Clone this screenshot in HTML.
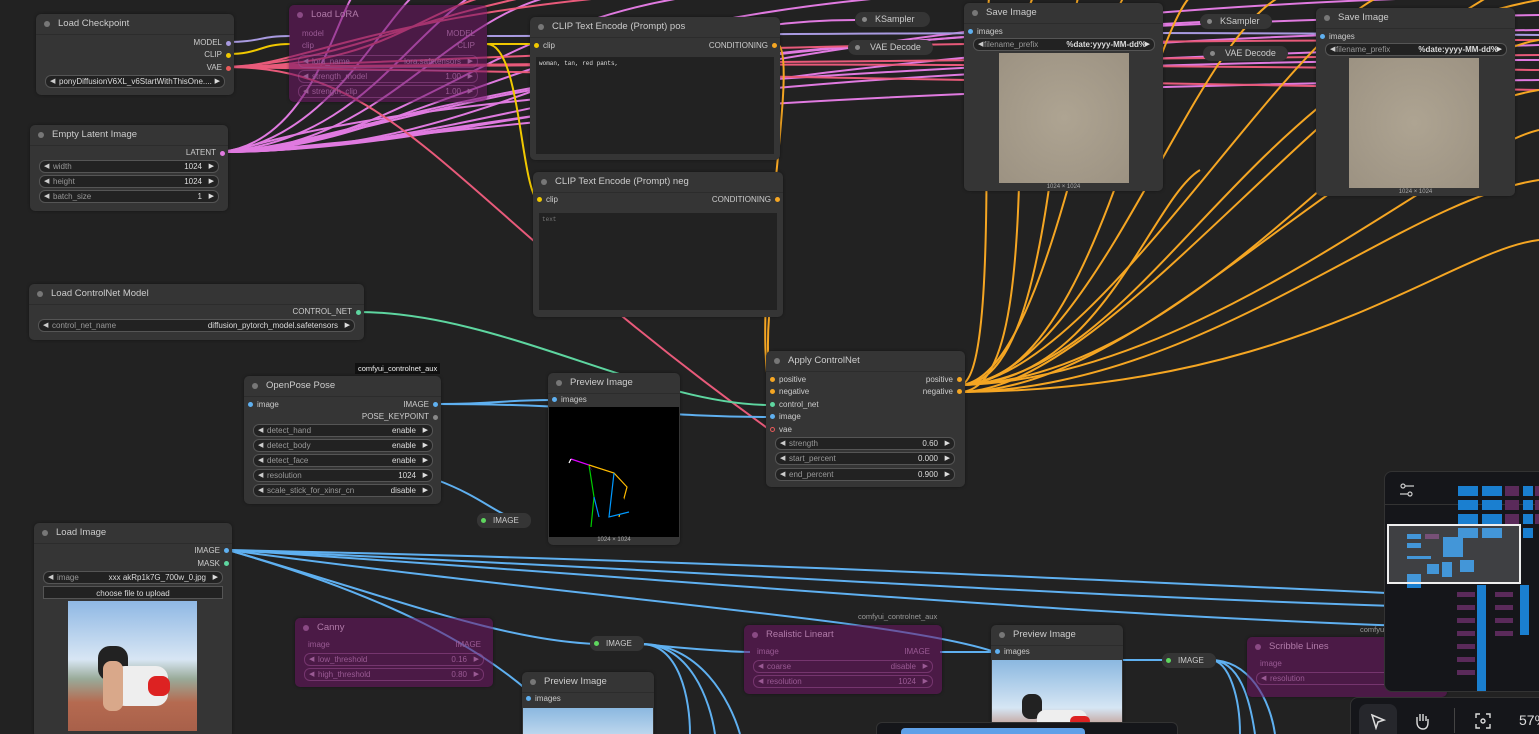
<!DOCTYPE html>
<html style="overflow:hidden"><head><style>
html,body{margin:0;width:1539px;height:734px;overflow:hidden}
body{background:#222;font-family:"Liberation Sans",sans-serif;font-size:9px;color:#ddd;position:relative}
.n{position:absolute;background:#353535;border-radius:5px;box-shadow:0 0 3px #0006}
.n .t{height:20px;line-height:20px;padding-left:22px;font-size:9.5px;color:#ccc;position:relative;border-bottom:1px solid #2c2c2c}
.n .t:before{content:"";position:absolute;left:8px;top:7px;width:6px;height:6px;border-radius:50%;background:#777}
.bp{background:rgba(110,20,100,.55)}
.bp .t{color:#b07aa8;border-color:transparent}
.bp .t:before{background:#8a4a84}
.bp .w{background:transparent;border-color:rgba(160,80,150,.5);color:#9a5a94}
.bp .w span,.bp .w:before,.bp .w:after,.bp .o{color:#9a5a94}
.w{position:absolute;height:11px;border:1px solid #555;background:#222;border-radius:6px;font-size:8px;line-height:11px;color:#999}
.w span{position:absolute;right:16px;color:#ddd}
.w:before{content:"◀";position:absolute;left:4px;font-size:7px;color:#ccc}
.w:after{content:"▶";position:absolute;right:4px;font-size:7px;color:#ddd}
.w i{font-style:normal;margin-left:13px}
.o{position:absolute;font-size:8px;color:#ccc}
.d{position:absolute;width:5px;height:5px;border-radius:50%}
.pill{position:absolute;height:15px;background:#353535;border-radius:8px;font-size:9px;line-height:15px;color:#ccc}
.pill:before{content:"";position:absolute;left:7px;top:5px;width:5px;height:5px;border-radius:50%;background:#888}
.r{position:absolute;height:15px;background:#353535;border-radius:7px;font-size:8px;line-height:15px;color:#ccc;padding:0 12px 0 16px}
.mb{position:absolute;background:#1a7fd0}
.mp{position:absolute;background:#5a2a5a}
</style></head><body>
<svg width="1539" height="734" style="position:absolute;left:0;top:0" fill="none" stroke-width="2">
<g stroke="#e07ae0">
<path d="M222 152C500 152 600 20 855 20"/><path d="M222 152C500 152 700 10 1539 -5"/><path d="M222 152C500 150 700 40 1539 30"/><path d="M222 152C450 150 600 60 1539 60"/><path d="M222 152C420 150 500 0 760 -10"/><path d="M222 152C420 150 520 10 1000 -10"/><path d="M222 152C400 150 450 -10 600 -10"/><path d="M222 152C400 140 480 30 1539 15"/><path d="M222 152C400 140 450 60 1200 22"/><path d="M222 152C300 140 350 80 1539 45"/><path d="M222 152C360 140 400 40 480 -10"/><path d="M222 152C330 140 380 20 420 -10"/><path d="M222 152C450 140 600 90 1539 80"/><path d="M222 152C320 140 340 -10 360 -10"/>
</g>
<g stroke="#e85a7a">
<path d="M228 67C500 67 700 60 1539 70"/><path d="M228 67C400 67 420 0 520 -10"/><path d="M228 67C500 60 700 40 1539 40"/><path d="M228 67C500 67 800 60 1539 55"/><path d="M228 67C300 67 380 10 700 -10"/><path d="M228 67C400 67 600 70 1539 90"/><path d="M228 67C400 67 450 200 770 430"/><path d="M228 67C350 60 400 20 560 -10"/>
</g>
<path d="M228 42C260 42 260 36 290 36" stroke="#a89ae0"/><path d="M228 54C260 54 260 44 290 44" stroke="#f0c800"/>
<path d="M487 44C520 44 520 180 537 200" stroke="#f0c800"/><path d="M487 44H537" stroke="#f0c800"/>
<path d="M487 36C700 36 900 30 1539 35" stroke="#a89ae0"/>
<path d="M358 312C500 312 650 405 770 405" stroke="#5ed6a0"/>
<path d="M437 404C500 404 500 400 553 400" stroke="#5fb0f0"/><path d="M437 404C600 404 650 417 770 417" stroke="#5fb0f0"/>
<path d="M437 480C490 500 500 520 527 520" stroke="#5fb0f0"/>
<g stroke="#5fb0f0"><path d="M228 550C700 560 1100 580 1539 600"/><path d="M228 550C700 570 1100 600 1539 610"/><path d="M228 550C700 580 1100 620 1539 630"/><path d="M228 550C400 600 500 640 596 644"/><path d="M228 550C400 600 480 650 527 690"/><path d="M228 550C600 600 900 620 995 652"/><path d="M641 644C700 644 730 700 740 734"/><path d="M641 644C690 644 710 700 715 734"/><path d="M641 644C680 644 690 700 690 734"/><path d="M641 644C700 650 740 652 750 652"/><path d="M940 652C990 652 995 652 995 652"/><path d="M1210 660C1240 660 1250 700 1255 734"/><path d="M1210 660C1230 660 1240 700 1240 734"/><path d="M1210 660C1250 660 1270 700 1275 734"/><path d="M1123 660C1140 660 1150 660 1165 660"/></g>
<g stroke="#f5a623">
<path d="M960 385C1100 385 1150 0 1200 -10"/><path d="M960 385C1100 380 1200 0 1300 -10"/><path d="M960 385C1050 380 1100 0 1130 -10"/><path d="M960 385C1200 380 1400 60 1539 40"/><path d="M960 385C1200 380 1450 150 1539 130"/><path d="M960 385C1100 380 1300 0 1400 -10"/><path d="M960 392C1050 390 1000 0 1040 -10"/><path d="M960 392C1200 390 1400 200 1539 180"/><path d="M960 392C1100 390 1300 100 1500 -10"/><path d="M960 385C1000 380 980 50 990 -10"/><path d="M960 385C1150 380 1250 50 1539 0"/><path d="M960 392C1300 390 1450 250 1539 240"/><path d="M960 385C1100 385 1150 200 1200 170"/><path d="M960 385C1050 385 1050 100 1080 -10"/><path d="M960 392C1150 390 1350 120 1539 90"/>
<path d="M778 200C790 220 760 300 770 380"/><path d="M778 44C800 60 750 300 770 392"/>
</g>
</svg>

<div class="n" style="left:36px;top:14px;width:198px;height:81px"><div class="t">Load Checkpoint</div>
<div class="o" style="right:12px;top:24px">MODEL</div><div class="o" style="right:12px;top:36px">CLIP</div><div class="o" style="right:12px;top:49px">VAE</div>
<div class="d" style="right:3px;top:27px;background:#a89ae0"></div><div class="d" style="right:3px;top:39px;background:#f0c800"></div><div class="d" style="right:3px;top:52px;background:#e85a5a"></div>
<div class="w" style="left:9px;top:61px;width:178px"><i style="color:#ddd">ponyDiffusionV6XL_v6StartWithThisOne....</i></div></div>

<div class="n bp" style="left:289px;top:5px;width:198px;height:97px"><div class="t">Load LoRA</div>
<div class="o" style="left:13px;top:24px">model</div><div class="o" style="left:13px;top:36px">clip</div>
<div class="o" style="right:12px;top:24px">MODEL</div><div class="o" style="right:12px;top:36px">CLIP</div>
<div class="w" style="left:9px;top:50px;width:178px"><i>lora_name</i><span>lora.safetensors</span></div>
<div class="w" style="left:9px;top:65px;width:178px"><i>strength_model</i><span>1.00</span></div>
<div class="w" style="left:9px;top:80px;width:178px"><i>strength_clip</i><span>1.00</span></div></div>

<div class="n" style="left:30px;top:125px;width:198px;height:86px"><div class="t">Empty Latent Image</div>
<div class="o" style="right:12px;top:23px">LATENT</div><div class="d" style="right:3px;top:26px;background:#e07ae0"></div>
<div class="w" style="left:9px;top:35px;width:178px"><i>width</i><span>1024</span></div>
<div class="w" style="left:9px;top:50px;width:178px"><i>height</i><span>1024</span></div>
<div class="w" style="left:9px;top:65px;width:178px"><i>batch_size</i><span>1</span></div></div>

<div class="n" style="left:530px;top:17px;width:250px;height:143px"><div class="t">CLIP Text Encode (Prompt) pos</div>
<div class="o" style="left:13px;top:24px">clip</div><div class="d" style="left:4px;top:26px;background:#f0c800"></div>
<div class="o" style="right:12px;top:24px">CONDITIONING</div><div class="d" style="right:3px;top:26px;background:#f5a623"></div>
<div style="position:absolute;left:6px;top:40px;width:238px;height:97px;background:#222;font:6px 'Liberation Mono',monospace;padding:3px;box-sizing:border-box">woman, tan, red pants,</div></div>

<div class="n" style="left:533px;top:172px;width:250px;height:145px"><div class="t">CLIP Text Encode (Prompt) neg</div>
<div class="o" style="left:13px;top:23px">clip</div><div class="d" style="left:4px;top:25px;background:#f0c800"></div>
<div class="o" style="right:12px;top:23px">CONDITIONING</div><div class="d" style="right:3px;top:25px;background:#f5a623"></div>
<div style="position:absolute;left:6px;top:41px;width:238px;height:97px;background:#222;font:6px 'Liberation Mono',monospace;padding:3px;box-sizing:border-box;color:#777">text</div></div>

<div class="pill" style="left:855px;top:12px;width:75px;padding-left:20px;box-sizing:border-box">KSampler</div>
<div class="pill" style="left:848px;top:40px;width:85px;padding-left:22px;box-sizing:border-box">VAE Decode</div>
<div class="pill" style="left:1200px;top:14px;width:72px;padding-left:20px;box-sizing:border-box">KSampler</div>
<div class="pill" style="left:1203px;top:46px;width:85px;padding-left:22px;box-sizing:border-box">VAE Decode</div>

<div class="n" style="left:964px;top:3px;width:199px;height:188px"><div class="t">Save Image</div>
<div class="o" style="left:13px;top:24px">images</div><div class="d" style="left:4px;top:26px;background:#5fb0f0"></div>
<div class="w" style="left:9px;top:35px;width:180px"><i style="margin-left:10px">filename_prefix</i><span style="right:8px;font-weight:bold">%date:yyyy-MM-dd%</span></div>
<div style="position:absolute;left:35px;top:50px;width:130px;height:130px;background:radial-gradient(#aea492,#9c9282)"></div>
<div style="position:absolute;left:0;width:100%;top:181px;text-align:center;font-size:6px;color:#aaa">1024 × 1024</div></div>

<div class="n" style="left:1316px;top:8px;width:199px;height:188px"><div class="t">Save Image</div>
<div class="o" style="left:13px;top:24px">images</div><div class="d" style="left:4px;top:26px;background:#5fb0f0"></div>
<div class="w" style="left:9px;top:35px;width:180px"><i style="margin-left:10px">filename_prefix</i><span style="right:8px;font-weight:bold">%date:yyyy-MM-dd%</span></div>
<div style="position:absolute;left:33px;top:50px;width:130px;height:130px;background:radial-gradient(#aea492,#9c9282)"></div>
<div style="position:absolute;left:0;width:100%;top:181px;text-align:center;font-size:6px;color:#aaa">1024 × 1024</div></div>

<div class="n" style="left:29px;top:284px;width:335px;height:56px"><div class="t">Load ControlNet Model</div>
<div class="o" style="right:12px;top:23px">CONTROL_NET</div><div class="d" style="right:3px;top:26px;background:#5ed6a0"></div>
<div class="w" style="left:9px;top:35px;width:315px"><i>control_net_name</i><span>diffusion_pytorch_model.safetensors</span></div></div>

<div style="position:absolute;left:355px;top:363px;background:#111;color:#eee;font-size:7.5px;padding:1px 3px">comfyui_controlnet_aux</div>
<div class="n" style="left:244px;top:376px;width:197px;height:128px"><div class="t">OpenPose Pose</div>
<div class="o" style="left:13px;top:24px">image</div><div class="d" style="left:4px;top:26px;background:#5fb0f0"></div>
<div class="o" style="right:12px;top:24px">IMAGE</div><div class="d" style="right:3px;top:26px;background:#5fb0f0"></div>
<div class="o" style="right:12px;top:36px">POSE_KEYPOINT</div><div class="d" style="right:3px;top:39px;background:#888"></div>
<div class="w" style="left:9px;top:48px;width:178px"><i>detect_hand</i><span>enable</span></div>
<div class="w" style="left:9px;top:63px;width:178px"><i>detect_body</i><span>enable</span></div>
<div class="w" style="left:9px;top:78px;width:178px"><i>detect_face</i><span>enable</span></div>
<div class="w" style="left:9px;top:93px;width:178px"><i>resolution</i><span>1024</span></div>
<div class="w" style="left:9px;top:108px;width:178px"><i>scale_stick_for_xinsr_cn</i><span>disable</span></div></div>

<div class="n" style="left:548px;top:373px;width:132px;height:172px"><div class="t">Preview Image</div>
<div class="o" style="left:13px;top:22px">images</div><div class="d" style="left:4px;top:24px;background:#5fb0f0"></div>
<div style="position:absolute;left:1px;top:34px;width:130px;height:130px;background:#000"><svg width="130" height="130" stroke-width="1.2"><path d="M22 52L40 58L50 72" stroke="#d0f"/><path d="M40 58L45 90L42 120" stroke="#0c0"/><path d="M40 58L65 66L78 80L70 110" stroke="#fb0"/><path d="M45 90L50 110" stroke="#08f"/><path d="M65 66L60 110L80 105" stroke="#09f"/><path d="M22 52L20 56" stroke="#fff"/></svg></div>
<div style="position:absolute;left:0;width:100%;top:164px;text-align:center;font-size:6px;color:#aaa">1024 × 1024</div></div>

<div class="n" style="left:766px;top:351px;width:199px;height:136px"><div class="t">Apply ControlNet</div>
<div class="o" style="left:13px;top:24px">positive</div><div class="d" style="left:4px;top:26px;background:#f5a623"></div>
<div class="o" style="left:13px;top:36px">negative</div><div class="d" style="left:4px;top:38px;background:#f5a623"></div>
<div class="o" style="left:13px;top:49px">control_net</div><div class="d" style="left:4px;top:51px;background:#5ed6a0"></div>
<div class="o" style="left:13px;top:61px">image</div><div class="d" style="left:4px;top:63px;background:#5fb0f0"></div>
<div class="o" style="left:13px;top:74px">vae</div><div class="d" style="left:4px;top:76px;border:1px solid #e85a5a;width:3px;height:3px"></div>
<div class="o" style="right:12px;top:24px">positive</div><div class="d" style="right:3px;top:26px;background:#f5a623"></div>
<div class="o" style="right:12px;top:36px">negative</div><div class="d" style="right:3px;top:38px;background:#f5a623"></div>
<div class="w" style="left:9px;top:86px;width:178px"><i>strength</i><span>0.60</span></div>
<div class="w" style="left:9px;top:101px;width:178px"><i>start_percent</i><span>0.000</span></div>
<div class="w" style="left:9px;top:117px;width:178px"><i>end_percent</i><span>0.900</span></div></div>

<div class="r" style="left:477px;top:513px">IMAGE</div><div class="d" style="left:481px;top:518px;background:#5ed65e"></div>
<div class="r" style="left:590px;top:636px">IMAGE</div><div class="d" style="left:594px;top:641px;background:#5ed65e"></div>
<div class="r" style="left:1162px;top:653px">IMAGE</div><div class="d" style="left:1166px;top:658px;background:#5ed65e"></div>

<div class="n" style="left:34px;top:523px;width:198px;height:215px"><div class="t">Load Image</div>
<div class="o" style="right:12px;top:23px">IMAGE</div><div class="d" style="right:3px;top:25px;background:#5fb0f0"></div>
<div class="o" style="right:12px;top:36px">MASK</div><div class="d" style="right:3px;top:38px;background:#5ed6a0"></div>
<div class="w" style="left:9px;top:48px;width:178px"><i>image</i><span>xxx akRp1k7G_700w_0.jpg</span></div>
<div style="position:absolute;left:9px;top:63px;width:180px;height:13px;background:#222;border:1px solid #555;text-align:center;line-height:13px;font-size:8px;color:#ddd;box-sizing:border-box">choose file to upload</div>
<div style="position:absolute;left:34px;top:78px;width:129px;height:130px;overflow:hidden;background:linear-gradient(#8fb8e4 0,#d8e6f4 45%,#9a9 60%,#b56a50 78%,#a8604a)"><div style="position:absolute;left:30px;top:45px;width:30px;height:35px;background:#222;border-radius:12px"></div><div style="position:absolute;left:45px;top:65px;width:55px;height:40px;background:#eee;border-radius:12px"></div><div style="position:absolute;left:80px;top:75px;width:22px;height:20px;background:#d22;border-radius:8px"></div><div style="position:absolute;left:35px;top:60px;width:20px;height:50px;background:#d9a88a;border-radius:8px"></div></div></div>

<div class="n bp" style="left:295px;top:618px;width:198px;height:69px"><div class="t">Canny</div>
<div class="o" style="left:13px;top:22px">image</div><div class="o" style="right:12px;top:22px">IMAGE</div>
<div class="w" style="left:9px;top:35px;width:178px"><i>low_threshold</i><span>0.16</span></div>
<div class="w" style="left:9px;top:50px;width:178px"><i>high_threshold</i><span>0.80</span></div></div>
<div style="position:absolute;left:858px;top:612px;font-size:7.5px;color:#999">comfyui_controlnet_aux</div>
<div class="n bp" style="left:744px;top:625px;width:198px;height:69px"><div class="t">Realistic Lineart</div>
<div class="o" style="left:13px;top:22px">image</div><div class="o" style="right:12px;top:22px">IMAGE</div>
<div class="w" style="left:9px;top:35px;width:178px"><i>coarse</i><span>disable</span></div>
<div class="w" style="left:9px;top:50px;width:178px"><i>resolution</i><span>1024</span></div></div>
<div style="position:absolute;left:1360px;top:625px;font-size:7.5px;color:#999">comfyu</div>
<div class="n bp" style="left:1247px;top:637px;width:200px;height:60px"><div class="t">Scribble Lines</div>
<div class="o" style="left:13px;top:22px">image</div>
<div class="w" style="left:9px;top:35px;width:178px"><i>resolution</i></div></div>

<div class="n" style="left:522px;top:672px;width:132px;height:70px"><div class="t">Preview Image</div>
<div class="o" style="left:13px;top:22px">images</div><div class="d" style="left:4px;top:24px;background:#5fb0f0"></div>
<div style="position:absolute;left:1px;top:36px;width:130px;height:40px;background:linear-gradient(#8bb8e0,#d6e6f4)"></div></div>
<div class="n" style="left:991px;top:625px;width:132px;height:120px"><div class="t">Preview Image</div>
<div class="o" style="left:13px;top:22px">images</div><div class="d" style="left:4px;top:24px;background:#5fb0f0"></div>
<div style="position:absolute;left:1px;top:35px;width:130px;height:80px;background:linear-gradient(#8bb8e0,#d6e6f4 60%,#b56a50)"><div style="position:absolute;left:30px;top:34px;width:20px;height:25px;background:#222;border-radius:8px"></div><div style="position:absolute;left:45px;top:50px;width:50px;height:20px;background:#eee;border-radius:8px"></div><div style="position:absolute;left:78px;top:56px;width:20px;height:10px;background:#d22;border-radius:5px"></div></div></div>

<div style="position:absolute;left:1384px;top:471px;width:170px;height:219px;background:#15161a;border-radius:8px;border:1px solid #333;overflow:hidden">
<div style="position:absolute;left:0;top:0;width:100%;height:32px;border-bottom:1px solid #333"></div>
<svg style="position:absolute;left:14px;top:10px" width="16" height="16" stroke="#ccc" fill="none" stroke-width="1.2"><circle cx="4" cy="4" r="2"/><path d="M6 4H15"/><circle cx="11" cy="12" r="2"/><path d="M1 12H9"/></svg>
<div class="mb" style="left:73px;top:14px;width:20px;height:10px"></div><div class="mb" style="left:97px;top:14px;width:20px;height:10px"></div><div class="mp" style="left:120px;top:14px;width:14px;height:10px"></div><div class="mb" style="left:138px;top:14px;width:10px;height:10px"></div><div class="mp" style="left:150px;top:14px;width:10px;height:10px"></div>
<div class="mb" style="left:73px;top:28px;width:20px;height:10px"></div><div class="mb" style="left:97px;top:28px;width:20px;height:10px"></div><div class="mp" style="left:120px;top:28px;width:14px;height:10px"></div><div class="mb" style="left:138px;top:28px;width:10px;height:10px"></div><div class="mp" style="left:150px;top:28px;width:10px;height:10px"></div>
<div class="mb" style="left:73px;top:42px;width:20px;height:10px"></div><div class="mb" style="left:97px;top:42px;width:20px;height:10px"></div><div class="mp" style="left:120px;top:42px;width:14px;height:10px"></div><div class="mb" style="left:138px;top:42px;width:10px;height:10px"></div><div class="mp" style="left:150px;top:42px;width:10px;height:10px"></div>
<div class="mb" style="left:73px;top:56px;width:20px;height:10px"></div><div class="mb" style="left:97px;top:56px;width:20px;height:10px"></div><div class="mb" style="left:138px;top:56px;width:10px;height:10px"></div>
<div class="mb" style="left:22px;top:62px;width:14px;height:5px"></div><div class="mp" style="left:40px;top:62px;width:14px;height:5px"></div><div class="mb" style="left:22px;top:71px;width:14px;height:5px"></div><div class="mb" style="left:22px;top:84px;width:24px;height:3px"></div>
<div class="mb" style="left:58px;top:65px;width:20px;height:20px"></div><div class="mb" style="left:42px;top:92px;width:12px;height:10px"></div><div class="mb" style="left:57px;top:90px;width:10px;height:15px"></div><div class="mb" style="left:75px;top:88px;width:14px;height:12px"></div>
<div class="mb" style="left:22px;top:102px;width:14px;height:14px"></div>
<div class="mb" style="left:92px;top:113px;width:9px;height:110px"></div><div class="mb" style="left:135px;top:113px;width:9px;height:50px"></div>
<div style="position:absolute;left:72px;top:120px;width:18px;height:90px;background:repeating-linear-gradient(#5a2a5a 0 5px,transparent 5px 13px)"></div>
<div style="position:absolute;left:110px;top:120px;width:18px;height:45px;background:repeating-linear-gradient(#5a2a5a 0 5px,transparent 5px 13px)"></div>
<div style="position:absolute;left:2px;top:52px;width:130px;height:56px;border:2px solid #eee;background:rgba(255,255,255,.18)"></div></div>

<div style="position:absolute;left:1350px;top:697px;width:200px;height:45px;background:#15161a;border:1px solid #333;border-radius:8px">
<div style="position:absolute;left:8px;top:6px;width:38px;height:38px;background:#26272c;border-radius:8px"></div>
<svg style="position:absolute;left:18px;top:14px" width="18" height="18" fill="none" stroke="#ddd" stroke-width="1.5"><path d="M3 3L15 8L9 10L7 16Z"/></svg>
<svg style="position:absolute;left:61px;top:13px" width="20" height="20" fill="none" stroke="#ddd" stroke-width="1.4"><path d="M5 11V6M8 10V3M11 10V3M14 10V5M5 11C5 16 8 18 11 18C15 18 16 15 16 11V8"/></svg>
<div style="position:absolute;left:103px;top:10px;width:1px;height:25px;background:#444"></div>
<svg style="position:absolute;left:124px;top:15px" width="16" height="16" fill="none" stroke="#ddd" stroke-width="1.4"><path d="M1 5V1H5M11 1H15V5M15 11V15H11M5 15H1V11"/><circle cx="8" cy="8" r="2"/></svg>
<div style="position:absolute;left:168px;top:14px;font-size:14px;color:#ddd">57%</div></div>

<div style="position:absolute;left:876px;top:722px;width:300px;height:20px;background:#15161a;border:1px solid #333;border-radius:6px"><div style="position:absolute;left:24px;top:5px;width:184px;height:10px;background:#5fa0e8;border-radius:4px"></div></div>
</body></html>
